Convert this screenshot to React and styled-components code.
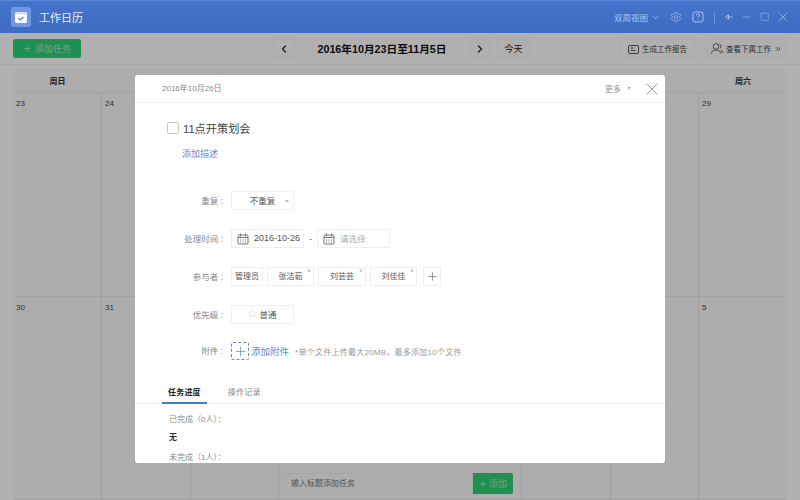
import React from 'react'
import styled, { createGlobalStyle } from 'styled-components'
import { ChevronDown, ChevronLeft, ChevronRight, ChevronsRight, Settings, X, Plus, Star, Minus, Square } from 'lucide-react'

const GlobalStyle = createGlobalStyle`
    html, body {
        margin: 0;
        padding: 0;
        background: #f8f8f8;
    }
    * {
        box-sizing: border-box;
    }
    body {
        font-family: "Liberation Sans", "Noto Sans CJK SC", sans-serif;
    }
`

const weekDays = ['周日', '周一', '周二', '周三', '周四', '周五', '周六']
const firstWeek = ['23', '24', '25', '26', '27', '28', '29']
const secondWeek = ['30', '31', '1', '2', '3', '4', '5']
const people = [
    { name: '管理员', width: 32 },
    { name: '张洁茹', width: 47, removable: true },
    { name: '刘芸芸', width: 48, removable: true },
    { name: '刘佳佳', width: 47, removable: true },
]

function CalendarIcon() {
    return (
        <svg width="12" height="12" viewBox="0 0 12 12" fill="none" stroke="#777" strokeWidth="1">
            <rect x="1" y="2" width="10" height="9" rx="1" />
            <path d="M1 4.5h10M3.5 .5v3M8.5 .5v3M3 7h1M5.500 7h1M8 7h1M3 9h1M5.500 9h1M8 9h1" />
        </svg>
    )
}

function App() {
    return (
        <Page>
            <GlobalStyle />
            <TitleBar>
                <AppLogo>
                    <svg width="14" height="14" viewBox="0 0 14 14">
                        <rect x="1" y="2" width="12" height="11" rx="1.5" fill="#fff" />
                        <rect x="1" y="2" width="12" height="2.5" fill="#d5e0f5" />
                        <path d="M4.5 8l2 2 3-3.2" fill="none" stroke="#4a76c9" strokeWidth="1.2" />
                    </svg>
                </AppLogo>
                <AppTitle>工作日历</AppTitle>
                <TitleSpacer />
                <ViewSwitch>双周视图<ChevronDown size={9} strokeWidth={2} /></ViewSwitch>
                <WinIcon $width={22}><Settings size={12} strokeWidth={1.3} /></WinIcon>
                <WinIcon $width={22}>
                    <svg width="12" height="12" viewBox="0 0 12 12" fill="none" stroke="currentColor">
                        <rect x="1" y="1" width="10" height="10" rx="2" />
                        <path d="M4.5 4.500a1.500 1.500 0 1 1 2.200 1.300c-.5.3-.7.6-.7 1.200M6 8.200v1" />
                    </svg>
                </WinIcon>
                <TitleDivider />
                <WinIcon $width={18}>
                    <svg width="8" height="8" viewBox="0 0 8 8" fill="none" stroke="currentColor">
                        <path d="M.8 4L3.500 1.800v4.400zM3.500 4h4" />
                    </svg>
                </WinIcon>
                <WinIcon $width={18}><Minus size={12} strokeWidth={1.2} /></WinIcon>
                <WinIcon $width={18}><Square size={9.5} strokeWidth={1.3} /></WinIcon>
                <WinIcon $width={18}><X size={16} strokeWidth={1} /></WinIcon>
            </TitleBar>

            <Toolbar>
                <GreenButton><Plus size={9} strokeWidth={2.5} />添加任务</GreenButton>
                <DateNav>
                    <ToolButton $width={22}><ChevronLeft size={12} strokeWidth={2.5} /></ToolButton>
                    <RangeTitle>2016年10月23日至11月5日</RangeTitle>
                    <ToolButton $width={22}><ChevronRight size={12} strokeWidth={2.5} /></ToolButton>
                    <ToolButton $width={33}>今天</ToolButton>
                </DateNav>
                <ToolActions>
                    <ToolButton $width={75} $small>
                        <svg width="11" height="10" viewBox="0 0 11 10" fill="none" stroke="#555">
                            <rect x=".5" y="1.500" width="10" height="8" rx="1.500" />
                            <path d="M2.500 4h3M2.500 6.500h5" />
                        </svg>
                        生成工作报告
                    </ToolButton>
                    <ToolButton $width={81} $small>
                        <svg width="12" height="11" viewBox="0 0 12 11" fill="none" stroke="#555" strokeWidth=".9">
                            <circle cx="5" cy="3.500" r="2.800" />
                            <path d="M.5 10.500c0-2.500 2-3.500 4.500-3.500s4.500 1 4.500 3.500M8.500 1c1.500.5 2 3 .5 4.500M10 7c1 .5 1.500 1.500 1.500 3" />
                        </svg>
                        查看下属工作
                        <ChevronsRight size={8} strokeWidth={2} />
                    </ToolButton>
                </ToolActions>
            </Toolbar>

            <Calendar>
                <CalendarGrid>
                    {weekDays.map(day => <DayHead key={day}>{day}</DayHead>)}
                    {firstWeek.map(day => <DayCell key={day}>{day}</DayCell>)}
                    {secondWeek.map((day, i) => (
                        <DayCell key={day}>
                            {day}
                            {i === 3 && (
                                <QuickAdd>
                                    <QuickInput>输入标题添加任务</QuickInput>
                                    <QuickButton><Plus size={8} strokeWidth={3} />添加</QuickButton>
                                </QuickAdd>
                            )}
                        </DayCell>
                    ))}
                </CalendarGrid>
            </Calendar>

            <Overlay>
                <Modal>
                    <ModalHead>
                        <ModalDate>2016年10月26日</ModalDate>
                        <MoreMenu>更多<Caret /></MoreMenu>
                        <CloseButton><X size={20} strokeWidth={0.8} /></CloseButton>
                    </ModalHead>

                    <TaskRow>
                        <CheckBox />
                        <TaskTitle>11点开策划会</TaskTitle>
                    </TaskRow>
                    <AddDescription>添加描述</AddDescription>

                    <Form>
                        <FormRow>
                            <FieldLabel>重复 :</FieldLabel>
                            <SelectBox $width={63}>
                                不重复
                                <SelectCaret />
                            </SelectBox>
                        </FormRow>
                        <FormRow>
                            <FieldLabel>处理时间 :</FieldLabel>
                            <DateInput>
                                <CalendarIcon />
                                <DateValue>2016-10-26</DateValue>
                            </DateInput>
                            <DateDash>-</DateDash>
                            <DateInput>
                                <CalendarIcon />
                                <DatePlaceholder>请选择</DatePlaceholder>
                            </DateInput>
                        </FormRow>
                        <FormRow>
                            <FieldLabel>参与者 :</FieldLabel>
                            <TagList>
                                {people.map(person => (
                                    <PersonTag key={person.name} $width={person.width}>
                                        {person.name}
                                        {person.removable && <TagRemove>×</TagRemove>}
                                    </PersonTag>
                                ))}
                                <AddPerson><Plus size={13} strokeWidth={1.2} /></AddPerson>
                            </TagList>
                        </FormRow>
                        <FormRow>
                            <FieldLabel>优先级 :</FieldLabel>
                            <SelectBox $width={63}>
                                <Star size={9} strokeWidth={1} color="#c4c4c4" />
                                普通
                            </SelectBox>
                        </FormRow>
                        <AttachRow>
                            <FieldLabel>附件 :</FieldLabel>
                            <AttachBox><Plus size={15} strokeWidth={1.2} /></AttachBox>
                            <AttachLink>添加附件</AttachLink>
                            <AttachHint>*单个文件上传最大20MB，最多添加10个文件</AttachHint>
                        </AttachRow>
                    </Form>

                    <Tabs>
                        <Tab $active>任务进度</Tab>
                        <Tab>操作记录</Tab>
                    </Tabs>
                    <Progress>
                        <ProgressLabel>已完成（0人）：</ProgressLabel>
                        <ProgressValue>无</ProgressValue>
                        <ProgressLabel>未完成（1人）：</ProgressLabel>
                    </Progress>
                </Modal>
            </Overlay>
        </Page>
    )
}

export default App

const Page = styled.div`
    position: relative;
    width: 800px;
    height: 500px;
    overflow: hidden;
    display: flex;
    flex-direction: column;
    color: #333;
`

const TitleBar = styled.header`
    height: 33px;
    flex: none;
    display: flex;
    align-items: center;
    padding: 0 8px 0 11px;
    background: linear-gradient(#4673cb, #3e6cc2);
    border-top: 1px solid #5a86d8;
    color: #a9c3ef;
`

const AppLogo = styled.div`
    width: 20px;
    height: 20px;
    border-radius: 3px;
    background: #6f97e2;
    display: flex;
    align-items: center;
    justify-content: center;
`

const AppTitle = styled.div`
    margin-left: 8px;
    font-size: 11px;
    color: #e8effb;
`

const TitleSpacer = styled.div`
    flex: 1;
`

const ViewSwitch = styled.div`
    display: flex;
    align-items: center;
    gap: 3px;
    margin-right: 5px;
    font-size: 8.5px;
`

const WinIcon = styled.div`
    width: ${props => props.$width}px;
    display: flex;
    justify-content: center;
`

const TitleDivider = styled.div`
    width: 1px;
    height: 13px;
    margin: 0 5px;
    background: #6c92d8;
`

const Toolbar = styled.div`
    height: 32px;
    flex: none;
    display: grid;
    grid-template-columns: 1fr auto 1fr;
    align-items: center;
    padding: 0 13px;
    background: #fcfcfc;
    border-bottom: 1px solid #f0f0f0;
`

const GreenButton = styled.div`
    width: 68px;
    height: 19px;
    display: flex;
    align-items: center;
    justify-content: center;
    gap: 3px;
    border-radius: 2px;
    background: #2ccf78;
    color: #a8e6c4;
    font-size: 9px;
`

const DateNav = styled.div`
    display: flex;
    align-items: center;
    gap: 6px;
    margin-left: 3px;
`

const RangeTitle = styled.div`
    width: 162px;
    text-align: center;
    font-size: 10.7px;
    font-weight: bold;
    color: #111;
    white-space: nowrap;
`

const ToolButton = styled.div`
    width: ${props => props.$width}px;
    height: 19px;
    display: flex;
    align-items: center;
    justify-content: center;
    gap: 3px;
    border: 1px solid #f2f2f2;
    border-radius: 2px;
    background: #fbfbfb;
    color: ${props => (props.$small ? '#444' : '#222')};
    font-size: ${props => (props.$small ? '7.5px' : '9px')};
`

const ToolActions = styled.div`
    display: flex;
    justify-content: flex-end;
    gap: 11px;
`

const Calendar = styled.div`
    flex: 1;
    padding: 3px 13px 0;
    background: #fcfcfc;
`

const CalendarGrid = styled.div`
    height: 100%;
    display: grid;
    grid-template-columns: 89px 89px 88px 243px 89px 88px 88px;
    grid-template-rows: 25px 204px 1fr;
    background: #f8f8f8;
`

const DayHead = styled.div`
    display: flex;
    align-items: center;
    justify-content: center;
    border-bottom: 1px solid #e8e8e8;
    font-size: 8px;
    font-weight: bold;
    color: #333;
`

const DayCell = styled.div`
    position: relative;
    padding: 6px 3px;
    border-bottom: 1px solid #e8e8e8;
    border-right: 1px solid #e4e4e4;
    font-size: 8px;
    color: #444;
    &:nth-child(7n) {
        border-right: none;
    }
`

const QuickAdd = styled.div`
    position: absolute;
    left: 6px;
    bottom: 5px;
    display: flex;
`

const QuickInput = styled.div`
    width: 188px;
    height: 21px;
    padding-left: 5px;
    line-height: 19px;
    background: #f8f8f8;
    border: 1px solid #f0f0f0;
    font-size: 8px;
    color: #777;
`

const QuickButton = styled.div`
    width: 40px;
    height: 21px;
    display: flex;
    align-items: center;
    justify-content: center;
    gap: 2px;
    border-radius: 0 2px 2px 0;
    background: #2ccf78;
    color: #a8e6c4;
    font-size: 9px;
`

const Overlay = styled.div`
    position: absolute;
    left: 0;
    right: 0;
    top: 33px;
    bottom: 0;
    padding-top: 42px;
    display: flex;
    justify-content: center;
    align-items: flex-start;
    background: rgba(0, 0, 0, 0.3);
`

const Modal = styled.div`
    width: 530px;
    height: 388px;
    overflow: hidden;
    border-radius: 3px;
    background: #fff;
`

const ModalHead = styled.div`
    height: 28px;
    display: flex;
    align-items: center;
    padding: 0 3px 0 27px;
    border-bottom: 1px solid #efefef;
`

const ModalDate = styled.div`
    flex: 1;
    padding-bottom: 2px;
    font-size: 8px;
    color: #888;
`

const MoreMenu = styled.div`
    display: flex;
    align-items: center;
    gap: 6px;
    font-size: 8px;
    color: #999;
`

const Caret = styled.span`
    border: 2px solid transparent;
    border-top: 3px solid #bbb;
    border-bottom: none;
`

const CloseButton = styled.div`
    margin-left: 11px;
    display: flex;
    color: #666;
`

const TaskRow = styled.div`
    margin: 18px 0 0 32px;
    height: 14px;
    display: flex;
    align-items: center;
    gap: 4px;
`

const CheckBox = styled.div`
    width: 12px;
    height: 12px;
    border: 1px solid #c4c4c4;
    border-radius: 2px;
`

const TaskTitle = styled.div`
    font-size: 11.2px;
    color: #444;
`

const AddDescription = styled.div`
    margin: 12px 0 0 47px;
    height: 14px;
    line-height: 14px;
    font-size: 9px;
    color: #5b8dd9;
`

const Form = styled.div`
    margin-top: 30px;
    display: flex;
    flex-direction: column;
    gap: 19px;
`

const FormRow = styled.div`
    height: 19px;
    display: flex;
    align-items: center;
`

const AttachRow = styled(FormRow)`
    margin-top: -1px;
    height: 18px;
`

const FieldLabel = styled.div`
    width: 88px;
    margin-right: 8px;
    padding-bottom: 2px;
    text-align: right;
    font-size: 8.5px;
    color: #888;
`

const SelectBox = styled.div`
    position: relative;
    width: ${props => props.$width}px;
    height: 19px;
    padding-bottom: 2px;
    display: flex;
    align-items: center;
    justify-content: center;
    gap: 2px;
    border: 1px solid #f0f0f0;
    font-size: 8.5px;
    color: #555;
`

const SelectCaret = styled(Caret)`
    position: absolute;
    right: 4px;
    top: 8px;
`

const DateInput = styled.div`
    width: 73px;
    height: 19px;
    display: flex;
    align-items: center;
    gap: 5px;
    padding-left: 5px;
    border: 1px solid #f0f0f0;
`

const DateValue = styled.span`
    margin-top: -2px;
    font-size: 9px;
    color: #555;
    white-space: nowrap;
`

const DatePlaceholder = styled.span`
    margin-top: -2px;
    font-size: 8.5px;
    color: #aaa;
`

const DateDash = styled.span`
    width: 13px;
    text-align: center;
    font-size: 9px;
    color: #666;
`

const TagList = styled.div`
    display: flex;
    gap: 4px;
`

const PersonTag = styled.div`
    position: relative;
    width: ${props => props.$width}px;
    height: 19px;
    padding-bottom: 2px;
    display: flex;
    align-items: center;
    justify-content: center;
    border: 1px solid #f0f0f0;
    font-size: 8px;
    color: #555;
`

const TagRemove = styled.span`
    position: absolute;
    right: 2px;
    top: -1px;
    font-size: 7px;
    color: #aaa;
`

const AddPerson = styled.div`
    width: 18px;
    height: 19px;
    margin-left: 2px;
    display: flex;
    align-items: center;
    justify-content: center;
    border: 1px solid #f0f0f0;
    color: #666;
`

const AttachBox = styled.div`
    width: 18px;
    height: 18px;
    display: flex;
    align-items: center;
    justify-content: center;
    border: 1px dashed #5b8dd9;
    border-radius: 2px;
    color: #5b8dd9;
`

const AttachLink = styled.div`
    margin-left: 2px;
    font-size: 9.5px;
    color: #5b8dd9;
`

const AttachHint = styled.div`
    margin-left: 6px;
    font-size: 8px;
    letter-spacing: 0.25px;
    color: #999;
`

const Tabs = styled.div`
    margin-top: 21px;
    height: 23px;
    display: flex;
    gap: 15px;
    padding-left: 27px;
    border-bottom: 1px solid #f2f2f2;
`

const Tab = styled.div`
    height: 23px;
    padding: 5px 6px 0;
    border-bottom: 2px solid ${props => (props.$active ? '#4a76c9' : 'transparent')};
    font-size: 8px;
    letter-spacing: 0.2px;
    font-weight: ${props => (props.$active ? 'bold' : 'normal')};
    color: ${props => (props.$active ? '#222' : '#888')};
`

const Progress = styled.div`
    padding: 10px 0 0 34px;
    display: flex;
    flex-direction: column;
    gap: 8px;
`

const ProgressLabel = styled.div`
    height: 11px;
    line-height: 11px;
    font-size: 8px;
    color: #888;
`

const ProgressValue = styled.div`
    height: 11px;
    margin: -1px 0 1px;
    line-height: 11px;
    font-size: 8px;
    font-weight: bold;
    color: #333;
`
